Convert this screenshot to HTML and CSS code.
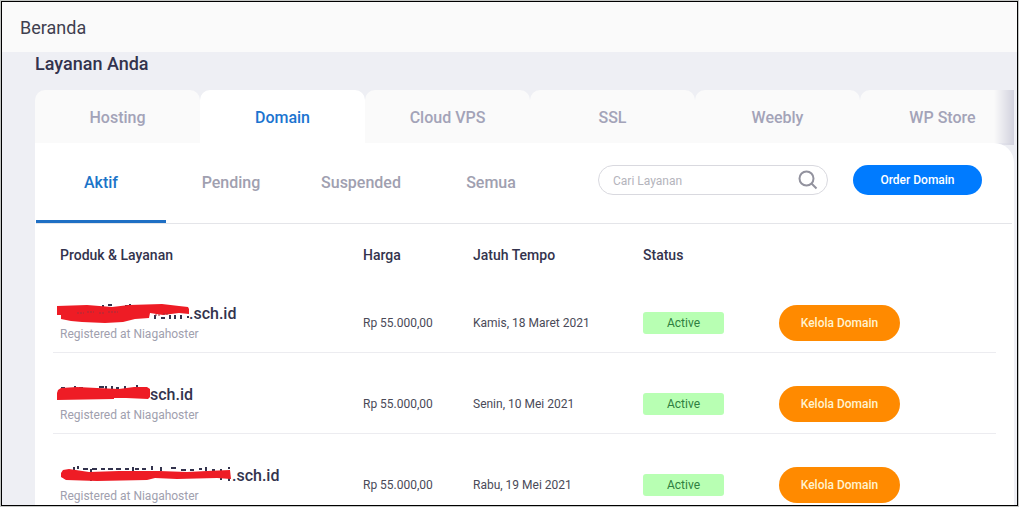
FILE: index.html
```html
<!DOCTYPE html>
<html lang="id">
<head>
<meta charset="utf-8">
<meta name="viewport" content="width=device-width, initial-scale=1">
<title>Beranda</title>
<link rel="stylesheet" href="styles.css">
</head>
<body>
<div class="frame">
  <header class="topbar">Beranda</header>
  <main class="content">
    <h1 class="heading">Layanan Anda</h1>
    <div class="tabs-wrap">
      <nav class="tabs">
        <a class="tab" href="#hosting">Hosting</a>
        <a class="tab tab-active" href="#domain">Domain</a>
        <a class="tab" href="#vps">Cloud VPS</a>
        <a class="tab" href="#ssl">SSL</a>
        <a class="tab" href="#weebly">Weebly</a>
        <a class="tab" href="#wp">WP Store</a>
      </nav>
      <div class="tabs-fade"></div>
    </div>
    <section class="card">
      <div class="toolbar">
        <nav class="filters">
          <a class="filter filter-active" href="#aktif">Aktif</a>
          <a class="filter" href="#pending">Pending</a>
          <a class="filter" href="#suspended">Suspended</a>
          <a class="filter" href="#semua">Semua</a>
        </nav>
        <div class="actions">
          <div class="search">
            <input class="search-input" type="text" placeholder="Cari Layanan" aria-label="Cari Layanan">
            <svg class="search-icon" viewBox="0 0 20 20" aria-hidden="true"><circle cx="8.5" cy="8.5" r="7"/><path d="M13.5 13.5L18.5 18.5"/></svg>
          </div>
          <button class="button order" type="button">Order Domain</button>
        </div>
      </div>
      <table class="table">
        <thead>
          <tr>
            <th class="col-name">Produk &amp; Layanan</th>
            <th class="col-price">Harga</th>
            <th class="col-date">Jatuh Tempo</th>
            <th class="col-status">Status</th>
            <th class="col-action"></th>
          </tr>
        </thead>
        <tbody>
          <tr>
            <td>
              <div class="domain">
                <svg class="mark mark-one" viewBox="0 0 132 22" aria-hidden="true">
                  <path class="ink" d="M22 5h4M31 5h3M46 2v3M51 2h4M68 3h4M73 1v4M98 12v4M104 15h4M113 12v4M118 12v4M124 12v4M130 14h2"/>
                  <path class="red" d="M0 3L30 2L55 4L72 2L105 1L122 3L131 4L132 6V11L122 10L106 12L93 10L92 15L78 16L66 19L48 20L25 19L14 18L4 16V12H0Z"/>
                  <path class="ink thin" d="M20 10h7M30 9h7M42 10h5M51 9h10M98 12h6M106 11h5"/>
                </svg>
                <span>.sch.id</span>
              </div>
              <div class="registrar">Registered at Niagahoster</div>
            </td>
            <td>Rp 55.000,00</td>
            <td>Kamis, 18 Maret 2021</td>
            <td><span class="badge">Active</span></td>
            <td><button class="button manage" type="button">Kelola Domain</button></td>
          </tr>
          <tr>
            <td>
              <div class="domain">
                <svg class="mark mark-two" viewBox="0 0 93 22" aria-hidden="true">
                  <path class="ink" d="M4 4h4M18 2v4M22 4h4M42 3h5M49 2v4M55 2v4M59 4h3M68 2v4M80 1v4M87 3v3"/>
                  <path class="red" d="M1 6L4 4L20 3L40 4L62 5L77 3L90 3L93 5V13L91 15L69 14H57V15L0 16V9Z"/>
                </svg>
                <span>sch.id</span>
              </div>
              <div class="registrar">Registered at Niagahoster</div>
            </td>
            <td>Rp 55.000,00</td>
            <td>Senin, 10 Mei 2021</td>
            <td><span class="badge">Active</span></td>
            <td><button class="button manage" type="button">Kelola Domain</button></td>
          </tr>
          <tr>
            <td>
              <div class="domain">
                <svg class="mark mark-three" viewBox="0 0 175 22" aria-hidden="true">
                  <path class="ink" d="M17 2v4M21 1v3M26 4h5M34 4v12M35 4h5M44 4h4M51 4h5M59 4h5M68 4h4M76 2v4M78 4h4M85 4h4M95 1v4M104 2v4M114 3h5M124 5h5M133 5h4M142 4h3M149 2v4M155 5h3M164 4v11M172 2v2M172 6v10"/>
                  <path class="red" d="M6 5L12 4L32 7L62 6L88 6L102 6L130 7L150 6L173 5L174 14L160 13L120 14L98 13L90 15L40 16L9 15L4 12V8Z"/>
                </svg>
                <span>.sch.id</span>
              </div>
              <div class="registrar">Registered at Niagahoster</div>
            </td>
            <td>Rp 55.000,00</td>
            <td>Rabu, 19 Mei 2021</td>
            <td><span class="badge">Active</span></td>
            <td><button class="button manage" type="button">Kelola Domain</button></td>
          </tr>
        </tbody>
      </table>
    </section>
  </main>
</div>
</body>
</html>
```

FILE: styles.css
```css
* { box-sizing: border-box; }

body {
  margin: 0;
  padding: 1px;
  background: #c4c6c4;
  font-family: Roboto, "Liberation Sans", sans-serif;
  color: #33334d;
}

.frame {
  height: calc(100vh - 2px);
  overflow: hidden;
  border: 1px solid #000;
  background: #eeeff4;
}

.topbar {
  display: flex;
  align-items: center;
  height: 50px;
  padding: 0 18px;
  background: #fafafa;
  font-size: 18px;
  color: #40404f;
}

.content { padding: 0 3px 0 33px; }

.heading {
  margin: 0;
  padding-bottom: 14px;
  font-size: 18px;
  line-height: 24px;
  font-weight: 500;
}

.tabs-wrap { position: relative; }

.tabs {
  display: flex;
  overflow: hidden;
}

.tab {
  flex: 0 0 165px;
  height: 53px;
  border-radius: 10px 10px 0 0;
  background: #fafafa;
  font-size: 16px;
  line-height: 56px;
  font-weight: 500;
  text-align: center;
  text-decoration: none;
  color: #a3a3b8;
}

.tab-active {
  background: #fff;
  color: #1b74d0;
}

.tabs-fade {
  position: absolute;
  top: 0;
  right: 0;
  width: 20px;
  height: 55px;
  background: linear-gradient(to right, rgba(205, 205, 218, 0), #d2d2de);
}

.card {
  position: relative;
  min-height: 400px;
  border-radius: 0 20px 0 0;
  background: #fff;
}

.toolbar {
  display: flex;
  justify-content: space-between;
  height: 81px;
  margin: 0 2px 0 1px;
  border-bottom: 1px solid #e4e5e9;
}

.filters { display: flex; }

.filter {
  width: 130px;
  height: 80px;
  font-size: 16px;
  line-height: 80px;
  font-weight: 500;
  text-align: center;
  text-decoration: none;
  color: #a0a0b0;
}

.filter-active {
  border-bottom: 3px solid #1f6fc4;
  color: #1b74c8;
}

.actions {
  display: flex;
  gap: 25px;
  padding: 22px 30px 0 0;
}

.search {
  display: flex;
  align-items: center;
  width: 230px;
  height: 30px;
  padding: 0 9px 0 14px;
  border: 1px solid #d9d9df;
  border-radius: 15px;
}

.search-input {
  flex: 1;
  min-width: 0;
  padding: 2px 0 0;
  border: 0;
  outline: 0;
  background: none;
  font: 12px/16px Roboto, sans-serif;
  color: #33334d;
}

.search-input::placeholder { color: #b4b4bc; }

.search-icon {
  width: 20px;
  height: 20px;
  fill: none;
  stroke: #92929e;
  stroke-width: 2;
}

.button {
  padding: 0;
  border: 0;
  font: 500 12px/16px Roboto, sans-serif;
  color: #fff;
}

.order {
  width: 129px;
  height: 30px;
  border-radius: 15px;
  background: #007bff;
}

.manage {
  width: 121px;
  height: 36px;
  border-radius: 18px;
  background: #ff8a00;
  color: #fff3cf;
}

.table {
  width: calc(100% - 36px);
  margin: 0 18px;
  border-collapse: separate;
  border-spacing: 0;
  table-layout: fixed;
}

th {
  height: 48px;
  padding: 14px 0 0;
  font-size: 14px;
  line-height: 18px;
  font-weight: 500;
  text-align: left;
}

td {
  height: 81px;
  padding: 22px 0 0;
  border-bottom: 1px solid #ececf0;
  font-size: 12px;
  line-height: 16px;
  color: #4a4a58;
}

th:first-child,
td:first-child { padding-left: 7px; }

.col-name { width: 310px; }
.col-price { width: 110px; }
.col-date { width: 170px; }
.col-status { width: 136px; }

.domain {
  display: flex;
  height: 22px;
  font-size: 16px;
  line-height: 22px;
  font-weight: 500;
  color: #33334d;
}

.mark {
  flex: none;
  height: 22px;
  margin-left: -3px;
}

.mark-one { width: 132px; }
.mark-two { width: 93px; }
.mark-three { width: 175px; }

.red { fill: #ee1c25; }

.ink {
  fill: none;
  stroke: #33334d;
  stroke-width: 2;
}

.thin {
  stroke: #a0303c;
  stroke-width: 1;
  stroke-dasharray: 2 1;
}

.registrar {
  line-height: 18px;
  color: #a0a0ae;
}

.badge {
  display: block;
  width: 81px;
  height: 22px;
  border-radius: 3px;
  background: #b8ffb3;
  line-height: 22px;
  text-align: center;
  color: #2f8040;
}
```
